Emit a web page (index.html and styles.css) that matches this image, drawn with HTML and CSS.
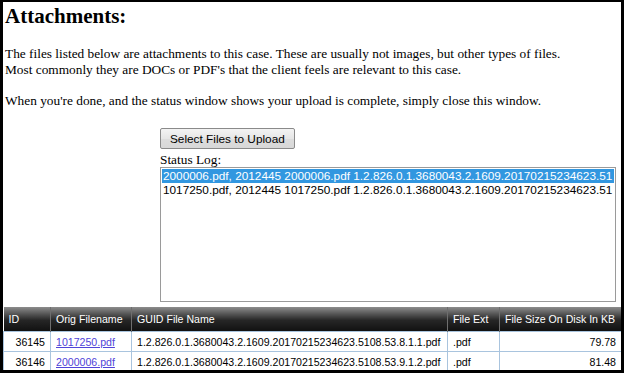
FILE: index.html
```html
<!DOCTYPE html>
<html>
<head>
<meta charset="utf-8">
<link rel="stylesheet" href="styles.css">
</head>
<body>
<div class="frame">
  <h1 class="title">Attachments:</h1>
  <p class="intro">The files listed below are attachments to this case. These are usually not images, but other types of files.<br>Most commonly they are DOCs or PDF's that the client feels are relevant to this case.</p>
  <p class="intro">When you're done, and the status window shows your upload is complete, simply close this window.</p>
  <div class="uploader">
    <button class="btn" type="button">Select Files to Upload</button>
    <div class="label">Status Log:</div>
    <div class="log">
      <div class="log-row selected">2000006.pdf, 2012445 2000006.pdf 1.2.826.0.1.3680043.2.1609.20170215234623.51</div>
      <div class="log-row">1017250.pdf, 2012445 1017250.pdf 1.2.826.0.1.3680043.2.1609.20170215234623.51</div>
    </div>
  </div>
  <table class="files">
    <colgroup>
      <col class="c-id"><col class="c-orig"><col class="c-guid"><col class="c-ext"><col class="c-size">
    </colgroup>
    <thead>
      <tr><th>ID</th><th>Orig Filename</th><th>GUID File Name</th><th>File Ext</th><th>File Size On Disk In KB</th></tr>
    </thead>
    <tbody>
      <tr><td class="num">36145</td><td><a href="#">1017250.pdf</a></td><td>1.2.826.0.1.3680043.2.1609.20170215234623.5108.53.8.1.1.pdf</td><td>.pdf</td><td class="num">79.78</td></tr>
      <tr><td class="num">36146</td><td><a href="#">2000006.pdf</a></td><td>1.2.826.0.1.3680043.2.1609.20170215234623.5108.53.9.1.2.pdf</td><td>.pdf</td><td class="num">81.48</td></tr>
    </tbody>
  </table>
</div>
</body>
</html>
```

FILE: styles.css
```css
html, body {
  margin: 0;
  padding: 0;
  background: #000;
}
.frame {
  box-sizing: border-box;
  width: 624px;
  height: 373px;
  overflow: hidden;
  background: #fff;
  border-style: solid;
  border-color: #000;
  border-width: 2px 3px 3px 3px;
  font-family: "Liberation Serif", "Times New Roman", serif;
  color: #000;
}
.title {
  margin: 1px 0 0 2px;
  font-size: 21px;
  line-height: 26px;
  font-weight: bold;
}
.intro {
  margin: 17px 0 0 2px;
  font-size: 13.33px;
  line-height: 16px;
}
.intro + .intro {
  margin-top: 15px;
}
.uploader {
  margin: 19px 0 0 157px;
  width: 456px;
}
.btn {
  display: block;
  height: 21px;
  padding: 0 9px;
  font-family: "Liberation Sans", Arial, sans-serif;
  font-size: 11.8px;
  color: #000;
  background: linear-gradient(#f3f3f3, #e6e6e6 50%, #dcdcdc 51%, #d8d8d8);
  border: 1px solid #8a8a8a;
  border-radius: 2px;
}
.label {
  margin-top: 4px;
  font-size: 13.33px;
  line-height: 14px;
}
.log {
  box-sizing: border-box;
  height: 135px;
  border: 1px solid #9a9a9a;
  padding: 1px;
  font-family: "Liberation Sans", Arial, sans-serif;
  font-size: 11.8px;
  line-height: 14px;
}
.log-row {
  white-space: nowrap;
  overflow: hidden;
  padding-left: 1px;
}
.log-row.selected {
  background: #3297e0;
  color: #fff;
}
.files {
  margin-top: 5px;
  width: 618px;
  border-collapse: collapse;
  table-layout: fixed;
  font-family: "Liberation Sans", Tahoma, sans-serif;
  font-size: 10.6px;
}
.c-id { width: 47px; }
.c-orig { width: 81px; }
.c-guid { width: 316px; }
.c-ext { width: 52px; }
.c-size { width: 122px; }
.files th {
  height: 24px;
  padding: 0 5px;
  text-align: left;
  font-weight: normal;
  color: #fff;
  background: linear-gradient(#8c8c8c 0%, #4a4a4a 35%, #262626 55%, #111 100%);
  border-left: 1px solid #6e6e6e;
  white-space: nowrap;
}
.files th:first-child {
  border-left: none;
}
.files td {
  height: 19px;
  padding: 0 5px;
  border: 1px solid #a9c4de;
  white-space: nowrap;
}
.files td.num {
  text-align: right;
}
.files a {
  color: #5044d8;
}
```
